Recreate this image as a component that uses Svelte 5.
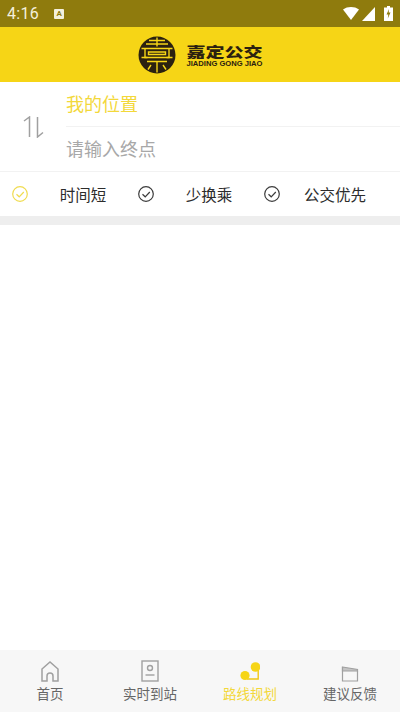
<script lang="ts">
	const options = [
		{ label: '时间短', active: true },
		{ label: '少换乘', active: false },
		{ label: '公交优先', active: false }
	];

	const tabs = [
		{ label: '首页', icon: 'home' },
		{ label: '实时到站', icon: 'stop' },
		{ label: '路线规划', icon: 'route', active: true },
		{ label: '建议反馈', icon: 'note' }
	];
</script>

<div class="page">
	<div class="status">
		<span class="time">4:16</span>
		<span class="a-badge">A</span>
		<span class="status-right">
			<svg width="16" height="13" viewBox="0 0 16 13"><path d="M0 2.5C2.3 .8 5 0 8 0s5.700 .8 8 2.500L8 13z" fill="#fff" /></svg>
			<svg width="13" height="14" viewBox="0 0 13 14"><path d="M13 0v14H0z" fill="#fff" /></svg>
			<svg class="battery" width="9" height="15" viewBox="0 0 9 15">
				<path d="M3 0h3v1.500h3V15H0V1.500h3z" fill="#fff" />
				<path d="M5 3 2.500 8.500h1.800L3.800 12.500 6.500 6.500H4.700z" fill="#8f7b0d" />
			</svg>
		</span>
	</div>

	<header class="brand">
		<svg class="emblem" width="38" height="38" viewBox="0 0 38 38">
			<circle cx="19" cy="19" r="18.500" fill="#2b2110" />
			<g fill="none" stroke="#f6d516" stroke-width="1.400">
				<path d="M11 4.500h16M19 1.500v9M8 8h22" />
				<path d="M3.500 12.500h31M7 12.500v9h24v-9M10.500 16h17v2.500h-17z" />
				<path d="M3.500 21.500h6M28.500 21.500h6" />
				<path d="M9 25.500h20M19 25.500v11M13 29l-3 4.500M25 29l3 4.500" />
			</g>
		</svg>
		<div class="brand-text">
			<span class="brand-cn">嘉定公交</span>
			<span class="brand-en">JIADING GONG JIAO</span>
		</div>
	</header>

	<section class="search">
		<div class="swap">
			<svg width="22" height="22" viewBox="0 0 22 22" fill="none" stroke="#a0a0a0" stroke-width="1.500">
				<path d="M1 5 6.500 1V21" />
				<path d="M14.500 1V21L20 16.500" />
			</svg>
		</div>
		<div class="fields">
			<div class="field from">我的位置</div>
			<div class="field to">请输入终点</div>
		</div>
	</section>

	<section class="options">
		{#each options as opt}
			<div class="option">
				<svg class="check" class:on={opt.active} width="16" height="16" viewBox="0 0 16 16" fill="none" stroke="currentColor" stroke-width="1.200">
					<circle cx="8" cy="8" r="7.300" />
					<path d="M4.500 8.200 7.200 10.800 11.800 6" />
				</svg>
				<span class="option-label">{opt.label}</span>
			</div>
		{/each}
	</section>
	<div class="band"></div>

	<main class="blank"></main>

	<nav class="tabs">
		{#each tabs as tab}
			<div class="tab" class:active={tab.active}>
				<span class="tab-icon">
					{#if tab.icon === 'home'}
						<svg width="18" height="21" viewBox="0 0 18 21" fill="none" stroke="#a0a0a0" stroke-width="1.500">
							<path d="M1 8 9 1l8 7v12h-5v-5a3 3 0 0 0-6 0v5H1z" />
						</svg>
					{:else if tab.icon === 'stop'}
						<svg width="18" height="22" viewBox="0 0 18 22" fill="none" stroke="#a0a0a0" stroke-width="1.400">
							<rect x="1" y="1" width="16" height="20" />
							<circle cx="9" cy="8" r="2.500" />
							<path d="M4.500 15h9" />
						</svg>
					{:else if tab.icon === 'route'}
						<svg width="20" height="21" viewBox="0 0 20 21">
							<path d="M18.200 9v9H7" fill="none" stroke="#f0c814" stroke-width="1.400" />
							<circle cx="15.500" cy="6" r="4.800" fill="#f6d516" />
							<circle cx="5" cy="14.500" r="4.600" fill="#f6d516" />
						</svg>
					{:else}
						<svg width="18" height="16" viewBox="0 0 18 16" fill="none" stroke="#a0a0a0" stroke-width="1.200">
							<path d="M1.500 1v14h15V5" />
							<path d="M1.500 1l15 2.500V5H1.500z" fill="#c4c4c4" />
						</svg>
					{/if}
				</span>
				<span class="tab-label">{tab.label}</span>
			</div>
		{/each}
	</nav>
</div>

<style>
	:global(body) {
		margin: 0;
		background: #fff;
	}

	.page {
		width: 400px;
		height: 712px;
		display: flex;
		flex-direction: column;
		font-family: 'Noto Sans CJK SC', 'Noto Sans', sans-serif;
		overflow: hidden;
	}

	/* status bar */
	.status {
		height: 27px;
		flex: none;
		background: #8f7b0d;
		display: flex;
		align-items: center;
		padding: 0 7px 0 7px;
		color: #fff;
	}

	.time {
		font-family: Roboto, sans-serif;
		font-size: 16px;
		letter-spacing: 0.3px;
		color: #f4f0dc;
	}

	.a-badge {
		width: 10px;
		height: 10px;
		margin-left: 15px;
		background: #f4f0dc;
		border-radius: 1px;
		color: #8f7b0d;
		font: 700 8px/10px Roboto, sans-serif;
		text-align: center;
	}

	.status-right {
		margin-left: auto;
		display: flex;
		align-items: center;
		gap: 3px;
	}

	.battery {
		margin-left: 6px;
	}

	/* logo header */
	.brand {
		height: 55px;
		flex: none;
		background: #f6d516;
		display: flex;
		align-items: center;
		justify-content: center;
		gap: 11px;
	}

	.brand-text {
		display: flex;
		flex-direction: column;
		align-items: center;
		gap: 3px;
		color: #2b2110;
		padding-top: 2px;
	}

	.brand-cn {
		font-size: 19px;
		font-weight: 900;
		line-height: 13px;
		height: 13px;
		width: 76px;
		white-space: nowrap;
		transform: scaleY(0.72);
	}

	.brand-en {
		font-family: 'Liberation Sans', sans-serif;
		font-size: 7.600px;
		font-weight: 700;
		line-height: 7px;
		white-space: nowrap;
	}

	/* start and end fields */
	.search {
		height: 89px;
		flex: none;
		display: flex;
		border-bottom: 1px solid #f2f2f2;
	}

	.swap {
		width: 66px;
		flex: none;
		display: flex;
		align-items: center;
		justify-content: flex-start;
		padding-left: 23px;
		box-sizing: border-box;
		padding-top: 1px;
	}

	.fields {
		flex: 1;
		display: flex;
		flex-direction: column;
	}

	.field {
		flex: 1;
		display: flex;
		align-items: center;
		padding-bottom: 2px;
		font-size: 18px;
	}

	.from {
		color: #f3d83a;
		border-bottom: 1px solid #f2f2f2;
	}

	.to {
		color: #a8a8a8;
	}

	/* route preference */
	.options {
		height: 44px;
		flex: none;
		display: flex;
		padding: 0 10px 0 12px;
		box-sizing: border-box;
	}

	.option {
		flex: 1;
		display: flex;
		align-items: center;
	}

	.check {
		flex: none;
		color: #3c3c3c;
	}

	.check.on {
		color: #f0dc50;
	}

	.option-label {
		flex: 1;
		text-align: center;
		font-size: 15.500px;
		color: #2c2c2c;
		padding-bottom: 1px;
	}

	.band {
		height: 9px;
		flex: none;
		background: #eeeeee;
	}

	.blank {
		flex: 1;
	}

	/* bottom tabs */
	.tabs {
		height: 62px;
		flex: none;
		background: #f7f7f7;
		display: flex;
	}

	.tab {
		flex: 1;
		display: flex;
		flex-direction: column;
		align-items: center;
		padding-top: 10px;
		box-sizing: border-box;
	}

	.tab-icon {
		height: 22px;
		display: flex;
		align-items: flex-end;
	}

	.tab-label {
		font-size: 13.500px;
		line-height: 20px;
		margin-top: 1px;
		color: #666;
	}

	.tab.active .tab-label {
		color: #f3d83a;
	}
</style>
